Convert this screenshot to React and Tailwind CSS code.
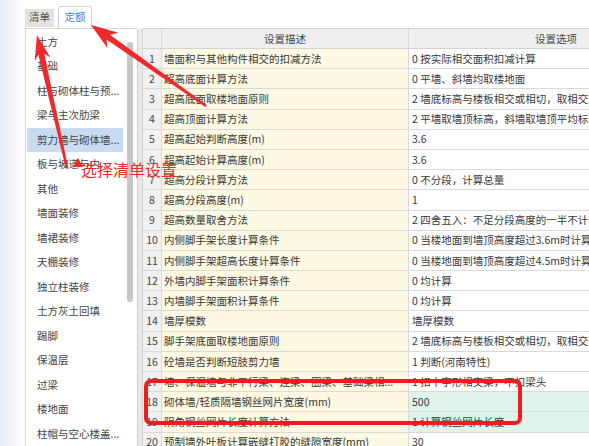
import React from "react";

const listItems = [
  "土方",
  "基础",
  "柱与砌体柱与预...",
  "梁与主次肋梁",
  "剪力墙与砌体墙...",
  "板与坡道与内...",
  "其他",
  "墙面装修",
  "墙裙装修",
  "天棚装修",
  "独立柱装修",
  "土方灰土回填",
  "踢脚",
  "保温层",
  "过梁",
  "楼地面",
  "柱帽与空心楼盖...",
];

const rows = [
  ["墙面积与其他构件相交的扣减方法", "0 按实际相交面积扣减计算"],
  ["超高底面计算方法", "0 平墙、斜墙均取楼地面"],
  ["超高底面取楼地面原则", "2 墙底标高与楼板相交或相切，取相交面以下部分"],
  ["超高顶面计算方法", "2 平墙取墙顶标高，斜墙取墙顶平均标高"],
  ["超高起始判断高度(m)", "3.6"],
  ["超高起始计算高度(m)", "3.6"],
  ["超高分段计算方法", "0 不分段，计算总量"],
  ["超高分段高度(m)", "1"],
  ["超高数量取舍方法", "2 四舍五入：不足分段高度的一半不计算"],
  ["内侧脚手架长度计算条件", "0 当楼地面到墙顶高度超过3.6m时计算"],
  ["内侧脚手架超高长度计算条件", "0 当楼地面到墙顶高度超过4.5m时计算"],
  ["外墙内脚手架面积计算条件", "0 均计算"],
  ["内墙脚手架面积计算条件", "0 均计算"],
  ["墙厚模数", "墙厚模数"],
  ["脚手架底面取楼地面原则", "2 墙底标高与楼板相交或相切，取相交面以下部分"],
  ["砼墙是否判断短肢剪力墙", "1 判断(河南特性)"],
  ["墙、保温墙与非平行梁、连梁、圈梁、基础梁相...", "1 扣十字形相交梁，不扣梁头"],
  ["砌体墙/轻质隔墙钢丝网片宽度(mm)", "500"],
  ["阴角钢丝网片长度计算方法", "1 计算钢丝网片长度"],
  ["预制墙外叶板计算嵌缝打胶的缝隙宽度(mm)", "30"],
];

function arrowPts(tx, ty, sx, sy, headLen, headW, neckW, tailW) {
  const dx = tx - sx;
  const dy = ty - sy;
  const L = Math.hypot(dx, dy);
  const ux = dx / L;
  const uy = dy / L;
  const px = -uy;
  const py = ux;
  const bx = tx - ux * headLen;
  const by = ty - uy * headLen;
  const nx = tx - ux * headLen * 0.78;
  const ny = ty - uy * headLen * 0.78;
  const p = [
    [tx, ty],
    [bx + (px * headW) / 2, by + (py * headW) / 2],
    [nx + (px * neckW) / 2, ny + (py * neckW) / 2],
    [sx + (px * tailW) / 2, sy + (py * tailW) / 2],
    [sx - (px * tailW) / 2, sy - (py * tailW) / 2],
    [nx - (px * neckW) / 2, ny - (py * neckW) / 2],
    [bx - (px * headW) / 2, by - (py * headW) / 2],
  ];
  return p.map((q) => q.map((v) => v.toFixed(1)).join(",")).join(" ");
}

export default function App() {
  return (
    <div className="relative w-[589px] h-[446px] overflow-hidden bg-white flex font-['Noto_Sans_CJK_SC',sans-serif] text-[10.5px] text-[#383838]">
      {/* left fade strip */}
      <div className="w-[25px] shrink-0 bg-linear-to-r from-[#e6ebf4] to-white" />

      {/* left column */}
      <div className="w-[112px] shrink-0 flex flex-col">
        <div className="h-[29px] flex items-end">
          <div className="w-[29px] h-[18px] mb-[1px] bg-[#e2e2e2] text-[#505050] flex items-center justify-center leading-none">
            清单
          </div>
          <div className="ml-[4px] w-[34px] h-[22px] border border-b-0 border-[#d2d2d2] rounded-t-[3px] bg-white text-[#3b7fd8] flex items-center justify-center leading-none">
            定额
          </div>
        </div>
        <div className="flex-1 flex border-l border-t border-[#d6d6d6] bg-white">
          <div className="w-[98px] pt-[1px] flex flex-col">
            {listItems.map((t, i) => (
              <div
                key={i}
                className={
                  "h-[24.5px] shrink-0 mx-[1px] pl-[10px] flex items-center whitespace-nowrap overflow-hidden text-[#444] " +
                  (i === 4 ? "bg-[#c9dcf1]" : "")
                }
              >
                {t}
              </div>
            ))}
          </div>
          <div className="w-[13px] pt-[13px] pl-[3px]">
            <div className="w-[6px] h-[260px] rounded-full bg-[#c7c7c7]" />
          </div>
        </div>
      </div>

      {/* gap strip */}
      <div className="w-[5px] shrink-0 mt-[29px] bg-[#e9e9e9] border-l border-[#cfcfcf]" />

      {/* table */}
      <div className="shrink-0 mt-[28px] flex flex-col border-l border-[#d4d4d4]">
        <div className="flex h-[21px] shrink-0 bg-[#efefef] border-t border-b border-[#d4d4d4] text-[#444]">
          <div className="w-[19px] border-r border-[#d9d9d9]" />
          <div className="w-[247px] border-r border-[#d9d9d9] flex items-center justify-center">设置描述</div>
          <div className="w-[294px] flex items-center justify-center">设置选项</div>
        </div>
        {rows.map(([d, o], i) => (
          <div key={i} className="flex h-[20.2px] shrink-0">
            <div className="w-[19px] bg-[#f1f1f1] border-r border-b border-[#dadada] flex items-center justify-center text-[#444]">
              {i + 1}
            </div>
            <div className="w-[247px] bg-[#fdf9e3] border-r border-b border-[#dadada] pl-[2px] flex items-center whitespace-nowrap overflow-hidden">
              {d}
            </div>
            <div
              className={
                "w-[294px] border-b border-[#dadada] pl-[3px] flex items-center whitespace-nowrap overflow-hidden " +
                (i === 17 || i === 18 ? "bg-[#dff3ea]" : "bg-white")
              }
            >
              {o}
            </div>
          </div>
        ))}
      </div>

      {/* red highlight box */}
      <div className="absolute left-[144px] top-[379px] w-[378px] h-[46px] border-[4px] border-[#ee1d1d] rounded-[7px]" />

      {/* annotation arrows */}
      <svg className="absolute inset-0 pointer-events-none" width="589" height="446" viewBox="0 0 589 446">
        <polygon points={arrowPts(37, 35, 67, 168, 25, 16, 6, 2.5)} fill="#f02a2a" />
        <polygon points={arrowPts(91, 25, 206, 106, 27, 19, 6, 2.5)} fill="#f02a2a" />
        <polygon points="78,158 73,167 83,167" fill="#f02a2a" />
      </svg>

      <div className="absolute left-[81px] top-[159px] text-[16px] leading-[20px] text-[#f12a2a] whitespace-nowrap">
        选择清单设置
      </div>
    </div>
  );
}
